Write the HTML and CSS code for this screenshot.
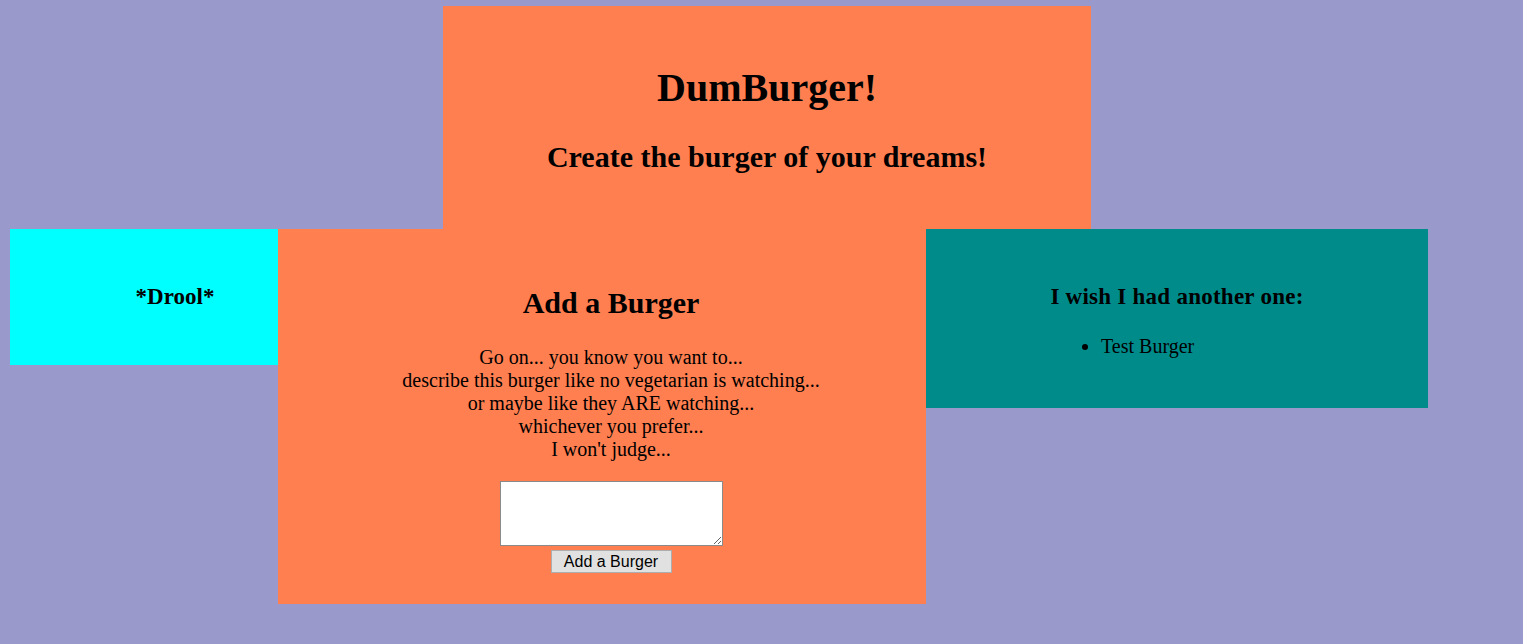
FILE: index.html
```html
<!DOCTYPE html>
<html>
<head>
<meta charset="utf-8">
<title>DumBurger!</title>
<link rel="stylesheet" href="styles.css">
</head>
<body>
<div class="page">
  <header class="hero">
    <h1 class="hero-title">DumBurger!</h1>
    <h2 class="hero-sub">Create the burger of your dreams!</h2>
  </header>
  <div class="row">
    <aside class="drool">
      <h2 class="drool-title">*Drool*</h2>
    </aside>
    <section class="add">
      <h2 class="add-title">Add a Burger</h2>
      <p class="add-text">Go on... you know you want to...<br>describe this burger like no vegetarian is watching...<br>or maybe like they ARE watching...<br>whichever you prefer...<br>I won't judge...</p>
      <form class="add-form">
        <textarea class="add-input"></textarea>
        <button type="button" class="add-btn">Add a Burger</button>
      </form>
    </section>
    <section class="wish">
      <h2 class="wish-title">I wish I had another one:</h2>
      <ul class="wish-list">
        <li>Test Burger</li>
      </ul>
    </section>
  </div>
</div>
</body>
</html>
```
FILE: styles.css
```css
html, body {
  margin: 0;
  padding: 0;
  background: #9999cc;
  font-family: "Liberation Serif", "Times New Roman", serif;
  color: #000;
}
.page {
  padding-top: 6px;
}
.hero {
  margin-left: 443px;
  width: 648px;
  height: 223px;
  background: #ff7f50;
  text-align: center;
  padding-top: 59px;
  box-sizing: border-box;
}
.hero-title {
  margin: 0;
  font-size: 40px;
  line-height: 46px;
  font-weight: bold;
}
.hero-sub {
  margin: 29px 0 0;
  font-size: 30px;
  line-height: 34px;
  font-weight: bold;
}
.row {
  display: flex;
  align-items: flex-start;
  margin-left: 10px;
}
.drool {
  width: 268px;
  height: 136px;
  background: #00ffff;
  box-sizing: border-box;
  padding: 55px 0 0 62px;
  text-align: center;
}
.drool-title {
  margin: 0;
  font-size: 23px;
  line-height: 26px;
  font-weight: bold;
}
.add {
  width: 648px;
  height: 375px;
  background: #ff7f50;
  box-sizing: border-box;
  padding: 57px 0 0 18px;
  text-align: center;
}
.add-title {
  margin: 0;
  font-size: 30px;
  line-height: 34px;
  font-weight: bold;
}
.add-text {
  margin: 26px 0 0;
  font-size: 20px;
  line-height: 23px;
}
.add-form {
  margin-top: 20px;
  display: flex;
  flex-direction: column;
  align-items: center;
  gap: 4px;
}
.add-input {
  width: 223px;
  height: 65px;
  box-sizing: border-box;
  border: 1px solid #8a8a8a;
  background: #fff;
  margin: 0;
  padding: 2px;
}
.add-btn {
  width: 121px;
  height: 23px;
  box-sizing: border-box;
  margin: 0;
  padding: 0;
  font-family: "Liberation Sans", Arial, sans-serif;
  font-size: 16px;
  line-height: 20px;
  color: #000;
  background: #e1e1e1;
  border: 1px solid #adadad;
}
.wish {
  width: 502px;
  height: 179px;
  background: #008b8b;
  box-sizing: border-box;
  padding-top: 55px;
  text-align: center;
}
.wish-title {
  margin: 0;
  font-size: 23px;
  line-height: 26px;
  font-weight: bold;
  letter-spacing: 0.25px;
}
.wish-list {
  margin: 25px 0 0 135px;
  padding-left: 40px;
  text-align: left;
  font-size: 20px;
  line-height: 23px;
}
```
